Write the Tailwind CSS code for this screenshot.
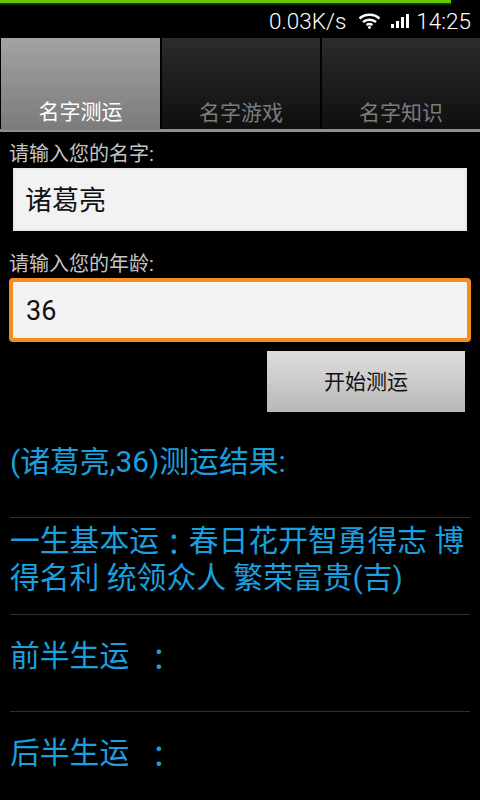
<!DOCTYPE html>
<html lang="zh">
<head>
  <meta charset="UTF-8">
  <meta name="viewport" content="width=device-width, initial-scale=1.0">
  <script src="https://cdn.jsdelivr.net/npm/@tailwindcss/browser@4"></script>
  <title>名字测运</title>
</head>
<body class="bg-black w-[480px] h-[800px] overflow-hidden font-['Roboto','Noto_Sans_CJK_SC',sans-serif]">

<!-- status bar -->
<div class="h-[38px] relative flex items-center justify-end pr-[9px] pt-[4px] text-white text-[22.5px] leading-none">
  <div class="absolute top-0 left-0 w-[451px] h-[3px] bg-[#66c600]"></div>
  <div class="absolute top-[3px] left-0 w-[451px] h-[4px] bg-gradient-to-b from-[#2a4a00] to-black"></div>
  <span class="font-light">0.03K/s</span>
  <svg class="ml-[12px]" width="23" height="16" viewBox="0 0 22 16" fill="none" stroke="white" stroke-width="2.4">
    <path d="M1 5.5 C6.5 0.5 15.5 0.5 21 5.5"/>
    <path d="M4.5 9 C8 6 14 6 17.5 9"/>
    <path d="M8 12 C9.8 10.8 12.2 10.8 14 12"/>
    <circle cx="11" cy="14.5" r="1.4" fill="white" stroke="none"/>
  </svg>
  <svg class="ml-[10px]" width="19" height="16" viewBox="0 0 19 16" fill="white">
    <rect x="0" y="11" width="3" height="4"/>
    <rect x="5" y="8" width="3" height="7"/>
    <rect x="10" y="4" width="3" height="11"/>
    <rect x="15" y="1" width="3" height="14"/>
  </svg>
  <span class="ml-[6px] font-light">14:25</span>
</div>

<!-- tabs -->
<div class="h-[94px] flex relative border-b-[3px] border-[#8e8e8e] text-[21px] leading-none">
  <div class="w-[159px] ml-[1px] -mb-[3px] flex items-end justify-center pb-[7px] text-white bg-gradient-to-b from-[#a3a3a3] to-[#7b7b7b] border-b-[2px] border-[#8e8e8e]">名字测运</div>
  <div class="w-[160px] flex items-end justify-center pb-[5px] text-[#7c7c7c] bg-gradient-to-b from-[#2c2c2c] to-[#0f0f0f] border-l-[2px] border-black">名字游戏</div>
  <div class="flex-1 flex items-end justify-center pb-[5px] text-[#7c7c7c] bg-gradient-to-b from-[#2c2c2c] to-[#0f0f0f] border-l-[2px] border-black">名字知识</div>
</div>

<!-- form -->
<div class="px-[10px]">
  <div class="mt-[9px] -ml-[1px] h-[27px] text-[20px] leading-[26px] text-[#c4c4c4]">请输入您的名字:</div>
  <div class="mx-[3px] h-[63px] flex items-center pl-[10px] pt-[3px] bg-[#f2f2f2] text-[27px] text-[#111] border-2 border-[#e8e8e8]">诸葛亮</div>
  <div class="mt-[20px] -ml-[1px] h-[27px] text-[20px] leading-[26px] text-[#c4c4c4]">请输入您的年龄:</div>
  <div class="-mx-[1px] h-[64px] flex items-center pl-[13px] pt-[3px] bg-[#f2f2f2] text-[27px] text-[#111] border-[4px] border-[#f48d1d] rounded-[4px]">36</div>
  <div class="flex justify-end mt-[9px] pr-[5px]">
    <div class="w-[198px] h-[61px] flex items-center justify-center pt-[3px] text-[21px] text-[#111] bg-gradient-to-b from-[#dedede] to-[#b8b8b8]">开始测运</div>
  </div>
</div>

<!-- results -->
<div class="px-[10px] text-[29.8px] leading-[38px] text-[#1a9fdf]">
  <div class="h-[106px] pt-[31px] border-b border-[#2e2e2e]">(诸葛亮,36)测运结果:</div>
  <div class="h-[97px] pt-[4px] leading-[37px] border-b border-[#2e2e2e]">一生基本运<span lang="zh-Hant" class="leading-none align-[-4px] font-['Noto_Sans_CJK_TC']">：</span>春日花开智勇得志 博得名利 统领众人 繁荣富贵(吉)</div>
  <div class="h-[97px] pt-[22px] border-b border-[#2e2e2e]">前半生运 &nbsp;<span lang="zh-Hant" class="leading-none align-[-4px] font-['Noto_Sans_CJK_TC']">：</span></div>
  <div class="pt-[22px]">后半生运 &nbsp;<span lang="zh-Hant" class="leading-none align-[-4px] font-['Noto_Sans_CJK_TC']">：</span></div>
</div>

</body>
</html>
